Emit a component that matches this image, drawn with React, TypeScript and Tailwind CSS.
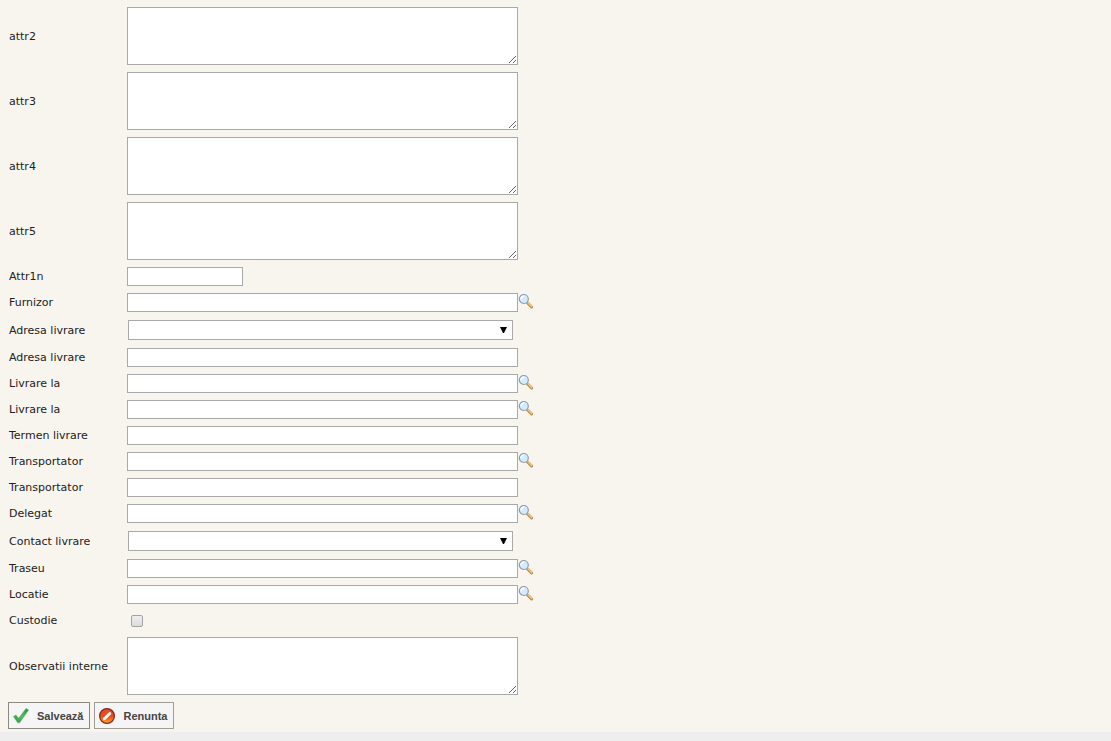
import React from 'react';

type FieldKind = 'textarea' | 'short' | 'text' | 'lookup' | 'select' | 'checkbox';

interface FieldDef {
  id: string;
  label: string;
  kind: FieldKind;
}

const FIELDS: FieldDef[] = [
  { id: 'attr2', label: 'attr2', kind: 'textarea' },
  { id: 'attr3', label: 'attr3', kind: 'textarea' },
  { id: 'attr4', label: 'attr4', kind: 'textarea' },
  { id: 'attr5', label: 'attr5', kind: 'textarea' },
  { id: 'attr1n', label: 'Attr1n', kind: 'short' },
  { id: 'furnizor', label: 'Furnizor', kind: 'lookup' },
  { id: 'adresaLista', label: 'Adresa livrare', kind: 'select' },
  { id: 'adresa', label: 'Adresa livrare', kind: 'text' },
  { id: 'livrareLa1', label: 'Livrare la', kind: 'lookup' },
  { id: 'livrareLa2', label: 'Livrare la', kind: 'lookup' },
  { id: 'termen', label: 'Termen livrare', kind: 'text' },
  { id: 'transportatorCod', label: 'Transportator', kind: 'lookup' },
  { id: 'transportator', label: 'Transportator', kind: 'text' },
  { id: 'delegat', label: 'Delegat', kind: 'lookup' },
  { id: 'contact', label: 'Contact livrare', kind: 'select' },
  { id: 'traseu', label: 'Traseu', kind: 'lookup' },
  { id: 'locatie', label: 'Locatie', kind: 'lookup' },
  { id: 'custodie', label: 'Custodie', kind: 'checkbox' },
  { id: 'observatii', label: 'Observatii interne', kind: 'textarea' },
];

const SearchIcon = () => (
  <svg width="16" height="16" viewBox="0 0 16 16" aria-hidden="true">
    <path d="M9.6 10 L13.6 14" stroke="#b98a4e" strokeWidth="3" strokeLinecap="round" />
    <path d="M10 9.8 L13.6 13.4" stroke="#f2c67e" strokeWidth="1.6" strokeLinecap="round" />
    <circle cx="5.8" cy="6" r="4.5" fill="#d3ebfb" stroke="#8c9db0" strokeWidth="1.2" />
    <path d="M3 6.2 A3 3 0 0 1 6 3.2" stroke="#fff" strokeWidth="1.4" fill="none" />
  </svg>
);

const CheckIcon = () => (
  <svg width="16" height="16" viewBox="0 0 16 16" aria-hidden="true">
    <defs>
      <linearGradient id="tick" x1="1" y1="0" x2="0" y2="1">
        <stop offset="0" stopColor="#2a8f42" />
        <stop offset="0.5" stopColor="#55bb62" />
        <stop offset="1" stopColor="#2f963f" />
      </linearGradient>
    </defs>
    <path d="M0.5 8.6 L2.9 7 L5.7 10.3 L13 0.5 L15.6 2 L6.6 14.8 L4.8 14.8 Z" fill="url(#tick)" stroke="#54b062" strokeWidth="0.6" strokeLinejoin="round" />
  </svg>
);

const CancelIcon = () => (
  <svg width="16" height="16" viewBox="0 0 16 16" aria-hidden="true">
    <defs>
      <linearGradient id="stop" x1="0" y1="0" x2="0" y2="1">
        <stop offset="0" stopColor="#e54a34" />
        <stop offset="0.5" stopColor="#ec481a" />
        <stop offset="1" stopColor="#ffa42e" />
      </linearGradient>
    </defs>
    <circle cx="8" cy="8" r="7.4" fill="url(#stop)" stroke="#7d2a1c" strokeWidth="1.2" />
    <path d="M5.3 10.7 L10.8 5.4" stroke="#fff" strokeWidth="2.8" strokeLinecap="round" />
  </svg>
);

const INPUT = 'block h-[19px] border border-[#a9a9a9] bg-white px-1 outline-none';

const Field: React.FC<{ field: FieldDef }> = ({ field }) => {
  const { id, label, kind } = field;
  switch (kind) {
    case 'textarea':
      return <textarea id={id} className="block h-[58px] w-[391px] resize border border-[#a9a9a9] bg-white p-0.5 outline-none" />;
    case 'short':
      return <input id={id} type="text" className={`${INPUT} w-[116px]`} />;
    case 'select':
      return (
        <div className="relative ml-px w-[385px]">
          <select id={id} className="block h-5 w-full appearance-none border border-[#a9a9a9] bg-white px-1 outline-none">
            <option value=""></option>
          </select>
          <svg width="7" height="6" viewBox="0 0 7 6" className="pointer-events-none absolute top-[7px] right-[6px]" aria-hidden="true">
            <path d="M0 0 H7 L4 6 H3 Z" fill="#000" />
          </svg>
        </div>
      );
    case 'checkbox':
      return (
        <input
          id={id}
          type="checkbox"
          className="ml-1 block size-3 appearance-none rounded-xs border border-[#a3a3a3] bg-linear-to-b from-[#eeeeee] to-[#dcdcdc] checked:from-[#8a8a8a] checked:to-[#777777]"
        />
      );
    default:
      return (
        <>
          <input id={id} type="text" className={`${INPUT} w-[391px]`} />
          {kind === 'lookup' && (
            <button type="button" aria-label={`Cauta ${label}`} className="block cursor-pointer self-start">
              <SearchIcon />
            </button>
          )}
        </>
      );
  }
};

export default function App() {
  return (
    <div className="min-h-screen bg-[#eeeeee] font-['DejaVu_Sans',Verdana,sans-serif] text-[11px] leading-4 text-[#222222]">
      <form className="bg-[#f8f5ee] pt-1 pb-[3px]" onSubmit={e => e.preventDefault()}>
        {FIELDS.map(field => (
          <div
            key={field.id}
            className={`flex items-center pt-[3px] pb-1 pl-[9px] ${field.kind === 'select' ? 'min-h-[29px]' : 'min-h-[26px]'}`}
          >
            <label htmlFor={field.id} className="w-[118px] shrink-0 pt-px">
              {field.label}
            </label>
            <Field field={field} />
          </div>
        ))}

        {/* Actions */}
        <div className="flex gap-1 pt-[3px] pl-2 font-['Liberation_Sans',Arial,sans-serif] font-bold text-[#444444]">
          <button type="submit" className="flex h-[27px] cursor-pointer items-center gap-2 border border-[#8c8884] bg-[#f5f5f5] pr-1.5 pl-1">
            <CheckIcon />
            Salvează
          </button>
          <button type="button" className="flex h-[27px] cursor-pointer items-center gap-2 border border-[#a09d99] bg-[#f5f5f5] pr-1.5 pl-1">
            <CancelIcon />
            Renunta
          </button>
        </div>
      </form>
    </div>
  );
}
